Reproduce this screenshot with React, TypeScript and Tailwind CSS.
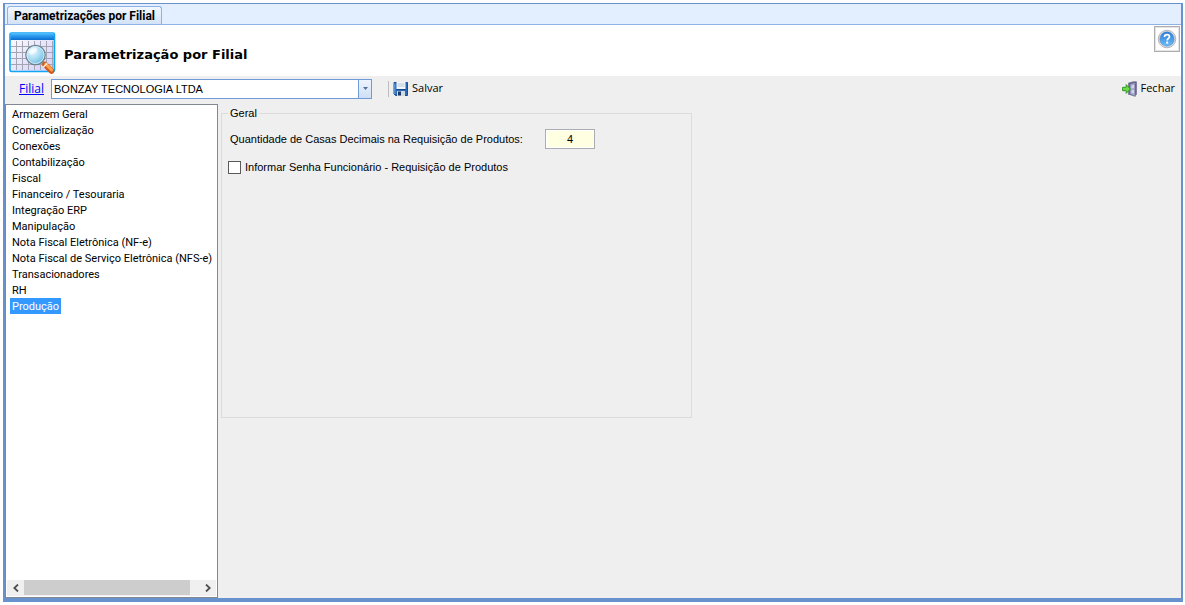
import { useState } from "react";

const sections = [
  "Armazem Geral",
  "Comercialização",
  "Conexões",
  "Contabilização",
  "Fiscal",
  "Financeiro / Tesouraria",
  "Integração ERP",
  "Manipulação",
  "Nota Fiscal Eletrônica (NF-e)",
  "Nota Fiscal de Serviço Eletrônica (NFS-e)",
  "Transacionadores",
  "RH",
  "Produção",
];

function GridSearchIcon() {
  return (
    <svg width="47" height="43" viewBox="0 0 47 43" aria-hidden="true">
      <defs>
        <linearGradient id="bar" x1="0" y1="0" x2="0" y2="1">
          <stop offset="0" stopColor="#55bbff" />
          <stop offset="0.35" stopColor="#2f9cf0" />
          <stop offset="1" stopColor="#0a6fd0" />
        </linearGradient>
        <linearGradient id="sheet" x1="0" y1="0" x2="1" y2="1">
          <stop offset="0" stopColor="#ffffff" />
          <stop offset="1" stopColor="#cfcdf8" />
        </linearGradient>
        <radialGradient id="lens" cx="0.35" cy="0.3" r="0.8">
          <stop offset="0" stopColor="#eefaff" />
          <stop offset="0.5" stopColor="#a9dcf3" />
          <stop offset="1" stopColor="#5fb2dc" />
        </radialGradient>
      </defs>
      <rect x="1" y="1" width="44.5" height="38.5" rx="1.5" fill="url(#sheet)" stroke="#10a5f5" strokeWidth="1.6" />
      <rect x="1.5" y="1.5" width="43.5" height="6.5" fill="url(#bar)" />
      <path
        d="M2 14.5H45M2 20.5H45M2 26.5H45M2 32.5H45M7.5 9V38M13.5 9V38M19.5 9V38M25.5 9V38M31.5 9V38M37.5 9V38M43.5 9V38"
        stroke="#a4a4b2"
        strokeWidth="1"
      />
      <path d="M33 30L36.5 33.5" stroke="#8a8f98" strokeWidth="3" />
      <path d="M36 32.5L42.5 39" stroke="#d2591c" strokeWidth="5.6" strokeLinecap="round" />
      <path d="M36.8 32.1L42.6 37.9" stroke="#ffa04a" strokeWidth="3" strokeLinecap="round" />
      <path d="M34.2 35.2L38.2 31.2" stroke="#fff0dc" strokeWidth="1.4" />
      <circle cx="26.5" cy="23" r="9.7" fill="url(#lens)" stroke="#70808e" strokeWidth="1.3" />
      <circle cx="26.5" cy="23" r="8.5" fill="none" stroke="#d8eef8" strokeWidth="0.9" />
      <ellipse cx="24" cy="19" rx="4.5" ry="2.6" fill="#ffffff" opacity="0.65" transform="rotate(-30 24 19)" />
    </svg>
  );
}

function SaveIcon() {
  return (
    <svg width="16" height="16" viewBox="0 0 16 16" aria-hidden="true">
      <path d="M1 1.5H14.5V14.5H2.5L1 13Z" fill="#2b6cb8" stroke="#1c4f94" />
      <rect x="3.5" y="1" width="9" height="7" fill="#f3f7fb" />
      <path d="M4.5 3H11.5M4.5 5H11.5" stroke="#b9c7d6" />
      <rect x="3.5" y="8" width="9" height="1" fill="#164a8c" />
      <rect x="4" y="10" width="8" height="5" fill="#d3dae2" />
      <rect x="5" y="10.5" width="3" height="4" fill="#1b3c68" />
      <path d="M1.8 2.5V13" stroke="#6ea6e2" />
    </svg>
  );
}

function ExitIcon() {
  return (
    <svg width="16" height="16" viewBox="0 0 16 16" aria-hidden="true">
      <path d="M6.5 2L11 0.8H14.5V13.5H6.5Z" fill="#66658c" stroke="#77779a" strokeWidth="0.8" />
      <path d="M7.8 2.8L13.3 1.3V15.3L7.8 13.5Z" fill="#a3a5c8" stroke="#5d5e85" strokeWidth="0.8" />
      <path d="M9.5 4.5L12 3.8V7L9.5 7.4ZM9.5 9.2L12 9V12.4L9.5 11.8Z" fill="#d3d5ea" />
      <path d="M0.6 6.3H4.2V3.6L8.4 8L4.2 12.4V9.7H0.6Z" fill="#6fdc48" stroke="#26901a" strokeWidth="0.9" />
    </svg>
  );
}

function HelpIcon() {
  return (
    <svg width="20" height="20" viewBox="0 0 20 20" aria-hidden="true">
      <defs>
        <linearGradient id="help" x1="0" y1="0" x2="0" y2="1">
          <stop offset="0" stopColor="#2a7cd6" />
          <stop offset="1" stopColor="#6dbcf7" />
        </linearGradient>
      </defs>
      <circle cx="10" cy="10" r="8.8" fill="#e0e0e3" stroke="#b0b0b5" strokeWidth="0.9" />
      <circle cx="10" cy="10" r="7.2" fill="url(#help)" stroke="#3f84cd" strokeWidth="0.5" />
      <path
        d="M7.5 8.1C7.5 6.5 8.5 5.7 10 5.7C11.6 5.7 12.5 6.5 12.5 7.7C12.5 9.3 10.2 9.4 10.2 11.4"
        fill="none"
        stroke="#ffffff"
        strokeWidth="1.7"
      />
      <rect x="9.2" y="12.6" width="2" height="2" fill="#ffffff" />
    </svg>
  );
}

export default function App() {
  const [selected, setSelected] = useState("Produção");

  return (
    <div className="h-screen bg-white pt-[3px] pr-0.5 pb-[3px] pl-[3px] font-['Liberation_Sans',sans-serif] text-[11px] text-black">
      <div className="flex h-full flex-col border-2 border-b-4 border-t border-[#6792cd] bg-[#efefef]">
        <div role="tablist" className="flex h-[21px] shrink-0 items-end border-b border-[#8db2e3] bg-[#e3eeff] px-0.5">
          <button
            role="tab"
            aria-selected="true"
            className="h-[18px] rounded-t-[3px] border border-b-0 border-[#8db2e3] bg-gradient-to-b from-[#f3f8ff] to-[#d3e2f7] px-1.5 pt-px font-[Roboto,sans-serif] text-xs leading-4 font-bold whitespace-nowrap"
          >
            Parametrizações por Filial
          </button>
        </div>

        <header className="flex h-[51px] shrink-0 items-start justify-between bg-white pt-px pr-px pl-1">
          <div className="flex items-center gap-2 pt-1.5">
            <GridSearchIcon />
            <h1 className="pt-0.5 font-['DejaVu_Sans',sans-serif] text-[13px] font-bold">Parametrização por Filial</h1>
          </div>
          <button
            aria-label="Ajuda"
            className="flex size-[26px] items-center justify-center border border-[#adadad] bg-white outline-1 -outline-offset-2 outline-[#e4e4e4]"
          >
            <HelpIcon />
          </button>
        </header>

        <div className="flex h-7 shrink-0 items-center pr-1.5 pb-[3px] pl-3.5 font-['Open_Sans',sans-serif] text-[11px]">
          <label htmlFor="filial" className="w-8 text-xs text-[#0000ff] underline">
            Filial
          </label>
          <div className="grid h-5 w-[321px]">
            <select
              id="filial"
              className="col-start-1 row-start-1 appearance-none border border-[#6f9bd8] bg-white px-0.5 font-['Liberation_Sans',sans-serif] text-[11px] leading-4"
            >
              <option>BONZAY TECNOLOGIA LTDA</option>
            </select>
            <span className="pointer-events-none col-start-1 row-start-1 flex w-3.5 items-center justify-center justify-self-end border border-[#6f9bd8] bg-gradient-to-b from-[#eef4fd] to-[#cfdff5]">
              <svg width="5" height="3" viewBox="0 0 5 3" aria-hidden="true">
                <path d="M0 0H5L2.5 3Z" fill="#52719c" />
              </svg>
            </span>
          </div>
          <span className="mx-4 mr-1 h-4 w-px bg-[#bdbdbd]" />
          <button className="flex items-center gap-[3px]">
            <SaveIcon />
            Salvar
          </button>
          <button className="ml-auto flex items-center gap-[3px]">
            <ExitIcon />
            Fechar
          </button>
        </div>

        <main className="flex min-h-0 flex-1 gap-[3px]">
          <nav aria-label="Seções" className="flex w-[213px] shrink-0 flex-col border border-[#828790] bg-white p-px">
            <ul className="min-h-0 flex-1 overflow-hidden pl-[3px] font-[Roboto,sans-serif]">
              {sections.map((name) => (
                <li key={name} className="flex h-4">
                  <button
                    onClick={() => setSelected(name)}
                    aria-current={name === selected}
                    className={
                      name === selected
                        ? "bg-[#3399ff] px-0.5 pt-px leading-[15px] whitespace-nowrap text-white"
                        : "px-0.5 pt-px leading-[15px] whitespace-nowrap"
                    }
                  >
                    {name}
                  </button>
                </li>
              ))}
            </ul>
            <div className="flex h-4 items-stretch bg-[#f0f0f0]">
              <button aria-label="Rolar para a esquerda" className="flex w-[17px] items-center justify-center">
                <svg width="6" height="8" viewBox="0 0 6 8" aria-hidden="true">
                  <path d="M5 0.5L1.3 4L5 7.5" fill="none" stroke="#505050" strokeWidth="1.8" />
                </svg>
              </button>
              <div className="flex flex-1">
                <div className="h-[15px] w-[166px] bg-[#cdcdcd]" />
              </div>
              <button aria-label="Rolar para a direita" className="flex w-[17px] items-center justify-center">
                <svg width="6" height="8" viewBox="0 0 6 8" aria-hidden="true">
                  <path d="M1 0.5L4.7 4L1 7.5" fill="none" stroke="#505050" strokeWidth="1.8" />
                </svg>
              </button>
            </div>
          </nav>

          <section className="pt-px">
            <fieldset className="h-[313px] w-[471px] border border-[#dcdcdc] px-1.5">
              <legend className="px-0.5 leading-4">Geral</legend>
              <div className="flex items-center pt-2 pl-0.5">
                <label htmlFor="casas" className="w-[315px] whitespace-nowrap">
                  Quantidade de Casas Decimais na Requisição de Produtos:
                </label>
                <input
                  id="casas"
                  defaultValue="4"
                  className="h-5 w-[50px] border border-[#abadb3] bg-[#ffffe1] text-center inset-ring inset-ring-white"
                />
              </div>
              <label className="flex items-center gap-1 pt-2.5 whitespace-nowrap">
                <input type="checkbox" className="size-[13px] appearance-none border border-[#5a5a5a] bg-white checked:bg-[#3399ff]" />
                Informar Senha Funcionário - Requisição de Produtos
              </label>
            </fieldset>
          </section>
        </main>
      </div>
    </div>
  );
}
